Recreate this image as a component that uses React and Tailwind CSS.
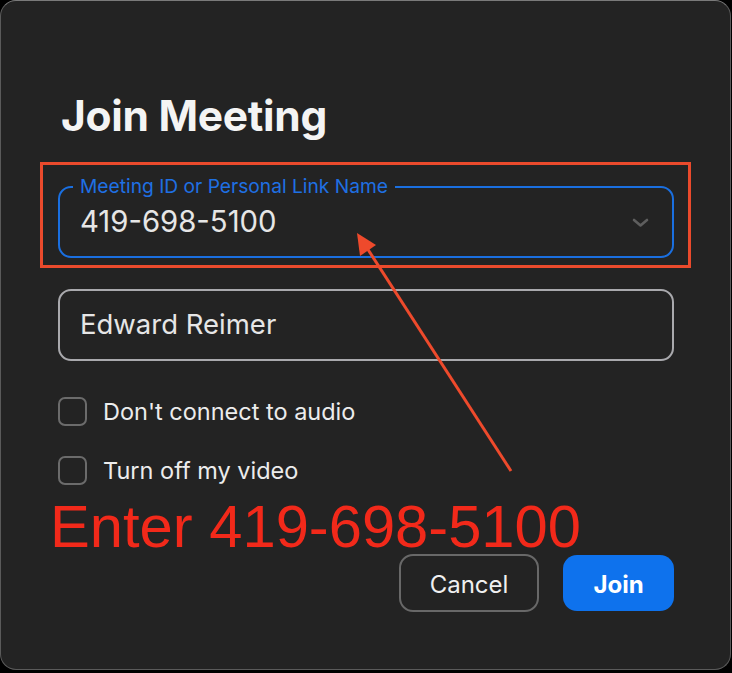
import React from "react";

const ui = { fontFamily: "Inter, 'Noto Sans', sans-serif" };
const arial = { fontFamily: "'Liberation Sans', Arial, sans-serif" };

function Checkbox({ label }) {
  return (
    <div className="flex h-[29px] items-center gap-[16px]">
      <div className="h-[29px] w-[29px] rounded-[7px] border-2 border-[#6b6b6b]" />
      <span className="text-[23.5px] leading-none text-[#ececec]" style={ui}>
        {label}
      </span>
    </div>
  );
}

export default function App() {
  return (
    <div className="h-[673px] w-[732px] bg-black">
      <div className="relative h-[670px] w-[731px] overflow-hidden rounded-[16px] border border-[#5a5a5a] border-t-[#7a7a7a] bg-[#232323]">
        <div className="flex flex-col pl-[57px] pr-[56px] pt-[91px]">
          <h1
            className="ml-[3px] h-[48px] text-[42.5px] font-bold leading-[48px] tracking-[-0.3px] text-[#f4f4f4]"
            style={ui}
          >
            Join Meeting
          </h1>

          <div className="relative mt-[46px] flex h-[72px] items-center justify-between rounded-[13px] border-2 border-[#1a6fe0] pl-[20px] pr-[23px]">
            <span
              className="absolute left-[13px] top-[-13px] bg-[#232323] px-[7px] text-[19.2px] leading-[22px] text-[#1f70e3]"
              style={ui}
            >
              Meeting ID or Personal Link Name
            </span>
            <span className="text-[29.3px] leading-none text-[#e6e6e6]" style={ui}>
              419-698-5100
            </span>
            <svg width="17" height="10" viewBox="0 0 17 10" className="mt-[2px]">
              <path d="M2 2 L8.5 7.5 L15 2" fill="none" stroke="#5e5e5e" strokeWidth="2.6" strokeLinecap="round" strokeLinejoin="round" />
            </svg>
          </div>

          <div className="mt-[31px] flex h-[72px] items-center rounded-[13px] border-2 border-[#a9a9ad] pl-[20px]">
            <span className="text-[27.5px] leading-none text-[#e6e6e6]" style={ui}>
              Edward Reimer
            </span>
          </div>

          <div className="mt-[36px]">
            <Checkbox label="Don't connect to audio" />
          </div>
          <div className="mt-[30px]">
            <Checkbox label="Turn off my video" />
          </div>

          <div
            className="ml-[-8px] mt-[14px] h-[55px] text-[59.7px] leading-[56px] text-[#f2291a]"
            style={arial}
          >
            Enter 419-698-5100
          </div>

          <div className="flex items-center justify-end gap-[24px]">
            <button
              className="flex h-[58px] w-[140px] items-center justify-center rounded-[14px] border-2 border-[#686868] pt-[3px] text-[24px] text-[#f0f0f0]"
              style={ui}
            >
              Cancel
            </button>
            <button
              className="flex h-[56px] w-[111px] items-center justify-center rounded-[14px] bg-[#0e72ed] pt-[3px] text-[24px] font-bold text-white"
              style={ui}
            >
              Join
            </button>
          </div>
        </div>

        <div className="pointer-events-none absolute left-[39px] top-[161px] h-[106px] w-[651px] border-[3px] border-[#ea4a2c]" />

        <svg className="pointer-events-none absolute left-0 top-0" width="731" height="670">
          <line x1="510" y1="470" x2="366" y2="247" stroke="#ee4a2c" strokeWidth="3" />
          <polygon points="356,232 375,244 359,255" fill="#ee4a2c" />
        </svg>
      </div>
    </div>
  );
}
